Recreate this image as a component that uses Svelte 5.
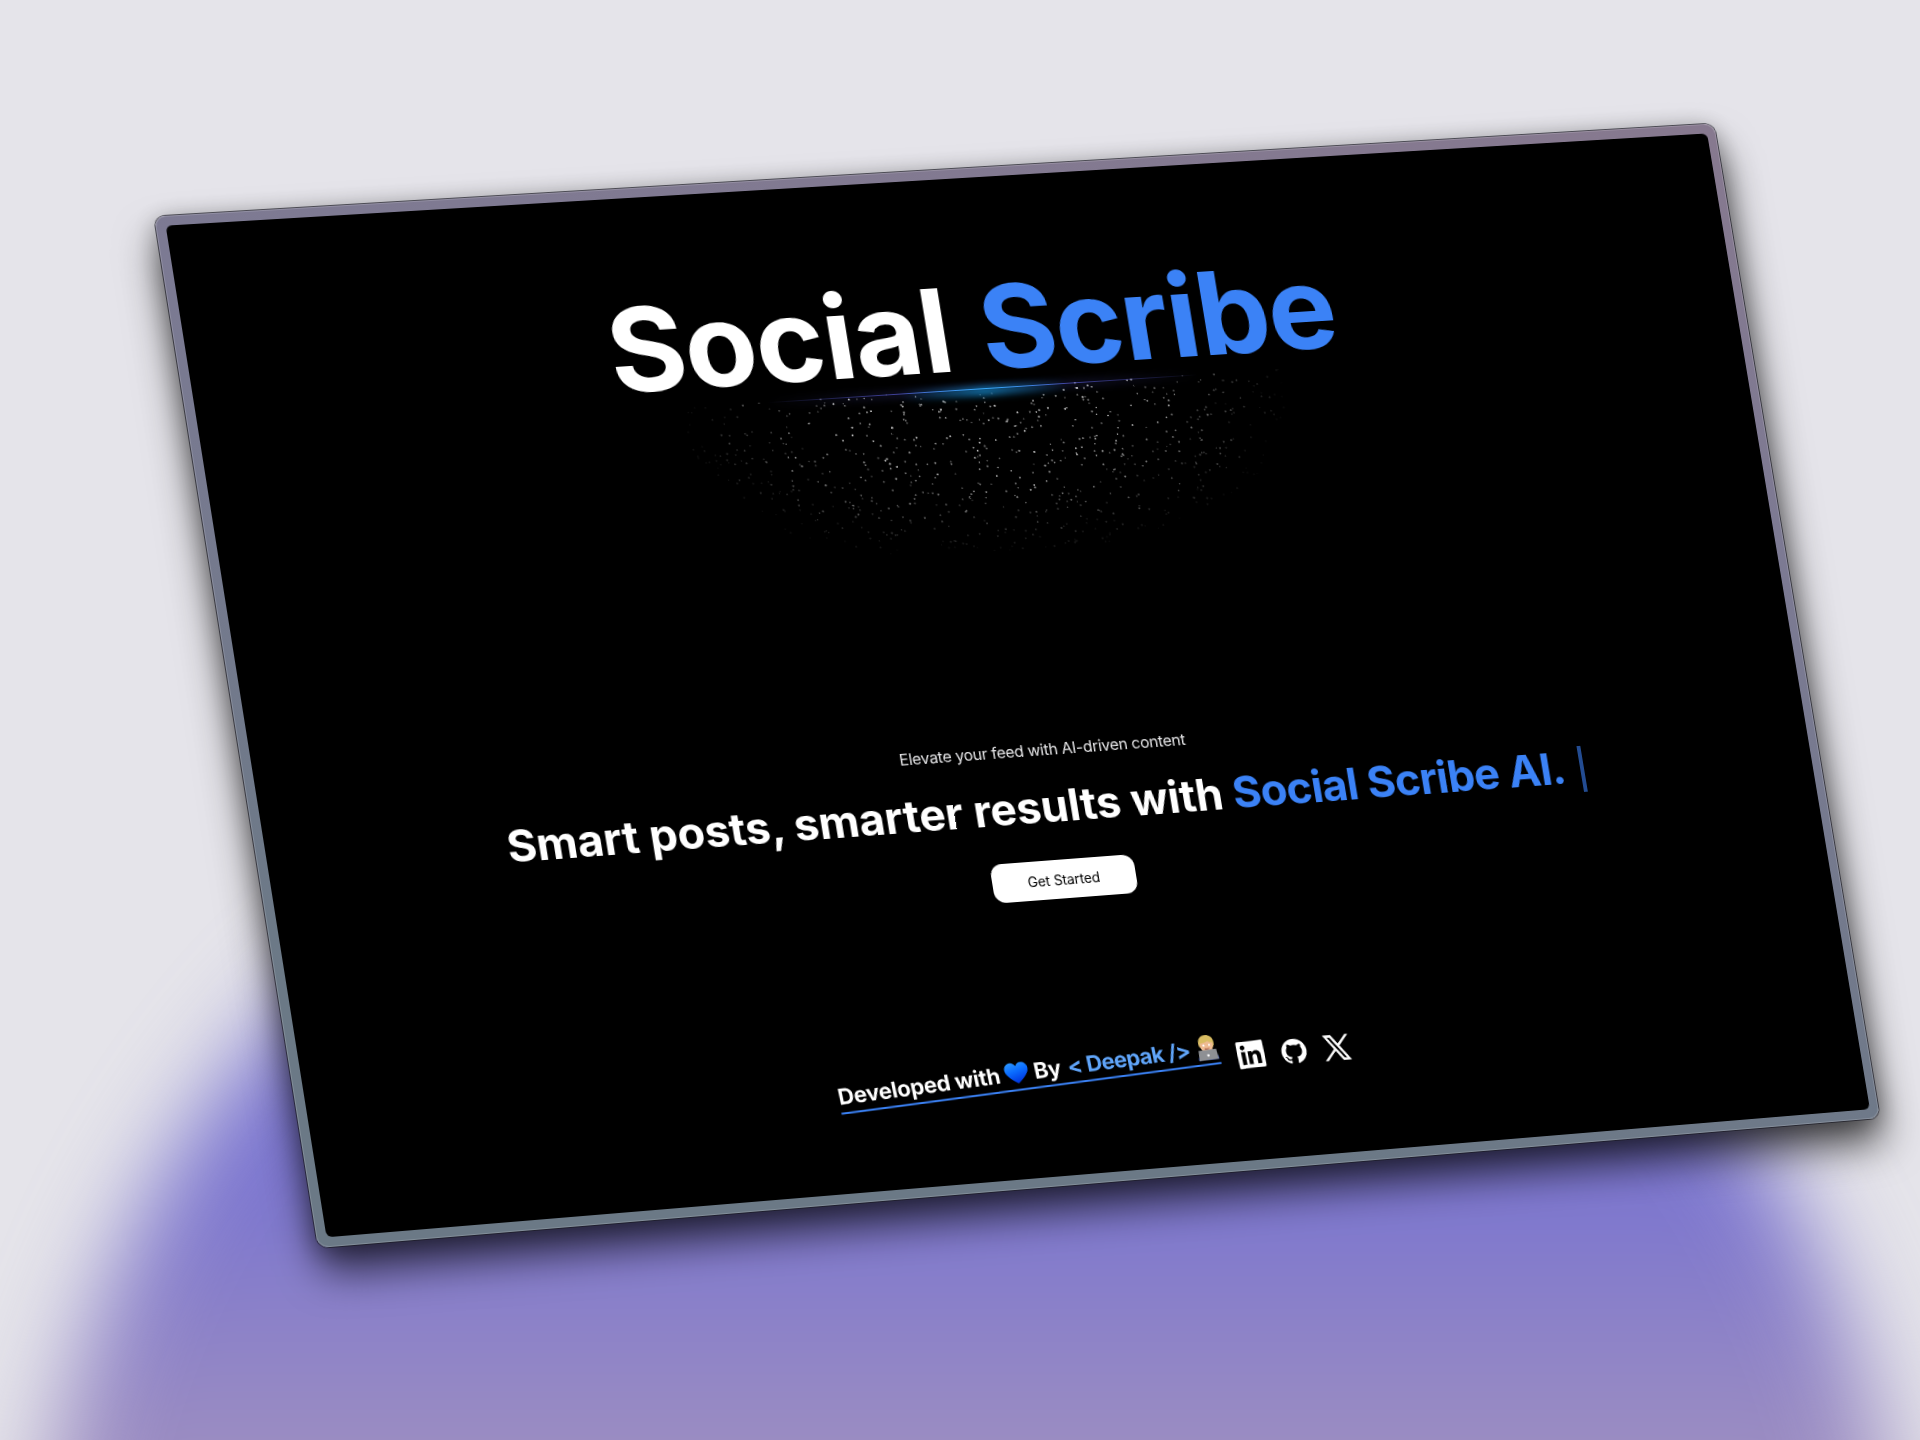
<script>
  const W = 1600, H = 1050;
  const corners = [[154, 216.5], [1714, 123.5], [1880, 1118], [318, 1248]];

  // Projects the flat W x H panel onto the four corners.
  function project([[x0, y0], [x1, y1], [x2, y2], [x3, y3]]) {
    const dx1 = x1 - x2, dx2 = x3 - x2, sx = x0 - x1 + x2 - x3;
    const dy1 = y1 - y2, dy2 = y3 - y2, sy = y0 - y1 + y2 - y3;
    const det = dx1 * dy2 - dx2 * dy1;
    const g = (sx * dy2 - dx2 * sy) / det;
    const h = (dx1 * sy - sx * dy1) / det;
    const m = [
      (x1 - x0 + g * x1) / W, (y1 - y0 + g * y1) / W, 0, g / W,
      (x3 - x0 + h * x3) / H, (y3 - y0 + h * y3) / H, 0, h / H,
      0, 0, 1, 0,
      x0, y0, 0, 1
    ];
    return `matrix3d(${m.map((n) => n.toFixed(9)).join(',')})`;
  }

  let seed = 20;
  function rnd() {
    seed = (seed * 16807) % 2147483647;
    return seed / 2147483647;
  }
  const sparks = [];
  while (sparks.length < 760) {
    const x = rnd() * 640, y = rnd() * 178;
    const d = Math.pow(Math.pow(Math.abs(x - 320) / 320, 2.5) + Math.pow(y / 178, 2.5), 1 / 2.5);
    if (d > 0.96) continue;
    sparks.push({ x, y, r: 0.65 + rnd() * 0.4, o: Math.min(1, (1 - d) * 1.6) * (0.35 + rnd() * 0.65) });
  }
</script>

<main>
  <div class="blob"></div>
  <div class="panel" style:transform={project(corners)}>
    <div class="screen">
      <h1><span class="white">Social</span> <span class="blue">Scribe</span></h1>
      <div class="sparkles">
        <i class="glow wide"></i><i class="line wide"></i><i class="glow near"></i><i class="line near"></i>
        <svg width="640" height="180" viewBox="0 0 640 180">
          {#each sparks as s}
            <circle cx={s.x} cy={s.y} r={s.r} opacity={s.o} />
          {/each}
        </svg>
      </div>
      <p class="lead">Elevate your feed with AI-driven content</p>
      <h2><span class="a">Smart posts, smarter results with</span> <span class="b">Social Scribe AI.</span><i class="caret"></i></h2>
      <button>Get Started</button>
      <footer>
        <div class="credit">
          <span class="dev">Developed with</span>
          <svg class="heart" viewBox="0 1 24 22">
            <defs><linearGradient id="hg" x1="0" y1="0" x2="0.3" y2="1"><stop offset="0" stop-color="#2f9bff" /><stop offset="0.5" stop-color="#0a6cff" /><stop offset="1" stop-color="#0038e0" /></linearGradient></defs>
            <path fill="url(#hg)" d="M12 22.500C9 20 .500 14.500.500 8.200.500 4.500 3.400 1.800 6.600 1.800 9.200 1.800 11 3.300 12 5.300 13 3.300 14.800 1.800 17.400 1.800 20.600 1.800 23.500 4.500 23.500 8.200 23.500 14.500 15 20 12 22.500Z" />
          </svg>
          <span class="by">By</span>
          <span class="name">&lt; Deepak /&gt;</span>
          <svg class="coder" viewBox="0 0 24 28">
            <path fill="#1d3fb5" d="M1 27.500c0-5.500 3-8.500 11-8.500s11 3 11 8.500z" />
            <path fill="#d9bd62" d="M4 12C2.500 4 7 .500 12 .500s9.500 3.500 8 11.500l-2 3h-12z" />
            <path fill="#eebb92" d="M5 9c3 0 7-.500 9-2 1 1.500 3 2 5 2.200 0 7-2.500 10.300-7 10.300S5 16 5 9z" />
            <circle cx="9" cy="11.500" r="1.100" fill="#3d2a20" /><circle cx="15" cy="11.500" r="1.100" fill="#3d2a20" />
            <path d="M9.500 15q2.500 1 5 0" stroke="#9b4b3b" fill="none" />
            <path fill="#8e9094" d="M2.500 16.500h19l1 11h-21z" /><circle cx="12" cy="22.500" r="1.300" fill="#e5e5e8" />
          </svg>
        </div>
        <div class="social">
          <svg viewBox="0 32 448 448" class="li"><path d="M416 32H31.900C14.300 32 0 46.500 0 64.300v383.400C0 465.500 14.300 480 31.900 480H416c17.600 0 32-14.500 32-32.300V64.300c0-17.800-14.400-32.300-32-32.300zM135.400 416H69V202.200h66.500V416zm-33.200-243c-21.300 0-38.500-17.300-38.500-38.500S80.900 96 102.200 96c21.200 0 38.500 17.300 38.500 38.500 0 21.300-17.200 38.500-38.500 38.500zm282.100 243h-66.400V312c0-24.800-.500-56.700-34.500-56.700-34.600 0-39.900 27-39.900 54.900V416h-66.400V202.200h63.700v29.200h.900c8.900-16.800 30.600-34.500 62.900-34.500 67.200 0 79.700 44.300 79.700 101.900V416z" /></svg>
          <svg viewBox="0 0 24 24" class="gh"><path d="M12 .500C5.650.500.500 5.650.500 12c0 5.080 3.290 9.390 7.860 10.910.580.110.790-.250.790-.550v-2.150c-3.200.700-3.870-1.360-3.870-1.360-.520-1.330-1.280-1.680-1.280-1.680-1.040-.710.080-.700.080-.700 1.160.080 1.770 1.190 1.770 1.190 1.030 1.760 2.700 1.250 3.350.960.110-.750.400-1.250.730-1.540-2.550-.290-5.240-1.280-5.240-5.680 0-1.250.450-2.280 1.180-3.080-.120-.290-.510-1.460.110-3.040 0 0 .970-.310 3.160 1.180a10.900 10.900 0 0 1 5.760 0c2.190-1.490 3.150-1.180 3.150-1.180.630 1.580.230 2.750.110 3.040.740.800 1.180 1.830 1.180 3.080 0 4.410-2.690 5.380-5.250 5.670.410.360.780 1.060.780 2.130v3.160c0 .310.210.670.800.550A11.500 11.500 0 0 0 23.500 12C23.500 5.650 18.350.500 12 .500z" /></svg>
          <svg viewBox="0 0 24 24" class="x"><path d="M14.095 10.316 22.286 1h-1.940L13.230 9.088 7.551 1H1l8.590 12.231L1 23h1.940l7.510-8.543L16.449 23H23zM11.436 13.339l-.872-1.219L3.640 2.432h2.980l5.590 7.821.869 1.219 7.265 10.166h-2.982z" /></svg>
        </div>
      </footer>
    </div>
  </div>
</main>

<style>
  :global(body) { margin: 0; }
  main { position: relative; width: 1920px; height: 1440px; overflow: hidden; background: #e5e4ea; font-family: Inter, sans-serif; }
  .blob { position: absolute; left: 33px; top: 716px; width: 1874px; height: 1874px; border-radius: 50%; filter: blur(46px); background: linear-gradient(#746fd0 0, #7b75cf 470px, #9a8cc2 720px, #a594bd 860px); }
  .panel { position: absolute; left: 0; top: 0; width: 1600px; height: 1050px; box-sizing: border-box; padding: 9.5px 9.5px 10.5px; transform-origin: 0 0; border-radius: 11px; background: linear-gradient(195deg, #87798f 0, #7c7a93 32%, #6b7986 82%); box-shadow: inset 0 0 0 1px rgba(255,255,255,.16), 0 0 0 1px rgba(25,25,35,.7), 0 25px 42px rgba(0,0,0,.66), 0 4px 24px rgba(0,0,0,.3); }
  .screen { display: flex; flex-direction: column; align-items: center; height: 100%; border-radius: 6px; background: #000; color: #fff; overflow: hidden; }
  h1 { margin: 85px 0 0; height: 133px; font-size: 119px; line-height: 143px; font-weight: 700; letter-spacing: -1.6px; word-spacing: 4.5px; white-space: nowrap; }
  .white { letter-spacing: -1.2px; }
  .blue, .b { color: #3b82f6; }
  .sparkles { position: relative; width: 640px; height: 180px; }
  .sparkles svg { display: block; }
  circle { fill: #fff; }
  .line, .glow { position: absolute; top: 0; }
  .wide { left: 100px; width: 440px; background: linear-gradient(to right, transparent, #6366f1, transparent); }
  .near { left: 235px; width: 170px; background: linear-gradient(to right, transparent, #0ea5e9, transparent); }
  .line { height: 1.5px; }
  .line.near { background: linear-gradient(to right, transparent, #38a8f8, transparent); }
  .glow.wide { height: 2px; filter: blur(4px); }
  .glow.near { height: 6px; filter: blur(4px); }
  .lead { margin: 183px 0 0; font-size: 16px; line-height: 24px; font-weight: 400; letter-spacing: -0.28px; color: #e4e4e6; }
  h2 { display: flex; align-items: center; margin: 17.500px 0 0; width: 1103px; height: 60px; font-size: 45px; line-height: 60px; font-weight: 700; white-space: nowrap; }
  .a { flex: 0 0 737.500px; letter-spacing: -0.1px; }
  .b { flex: 1; letter-spacing: -0.75px; }
  .caret { flex: none; width: 3.500px; height: 48px; margin-top: 3px; background: #234c92; }
  button { margin-top: 25px; width: 147px; height: 40px; border: 0; border-radius: 12px; background: #fff; color: #000; font: 400 14px Inter, sans-serif; letter-spacing: -0.1px; }
  footer { display: flex; align-items: center; margin: 156px 0 0 1px; }
  .credit { display: flex; align-items: center; width: 392px; height: 34px; border-bottom: 2px solid #3b82f6; transform: rotate(-3deg); font-size: 22.500px; font-weight: 700; letter-spacing: -0.3px; white-space: nowrap; }
  .heart { width: 25px; height: 23px; margin: 0 5px; }
  .name { margin-left: 7px; color: #60a5fa; letter-spacing: -0.6px; }
  .coder { width: 23px; height: 27px; margin-left: auto; margin-right: 0; }
  .social { display: flex; gap: 17px; margin-left: 18px; align-items: center; transform: translateY(.5px); }
  .social svg { width: 28px; height: 28px; fill: #fff; }
  .social .li { transform: rotate(-2.500deg); }
  .social .gh { width: 27px; height: 27px; }
  .social .x { stroke: #fff; stroke-width: .6; overflow: visible; }
</style>
